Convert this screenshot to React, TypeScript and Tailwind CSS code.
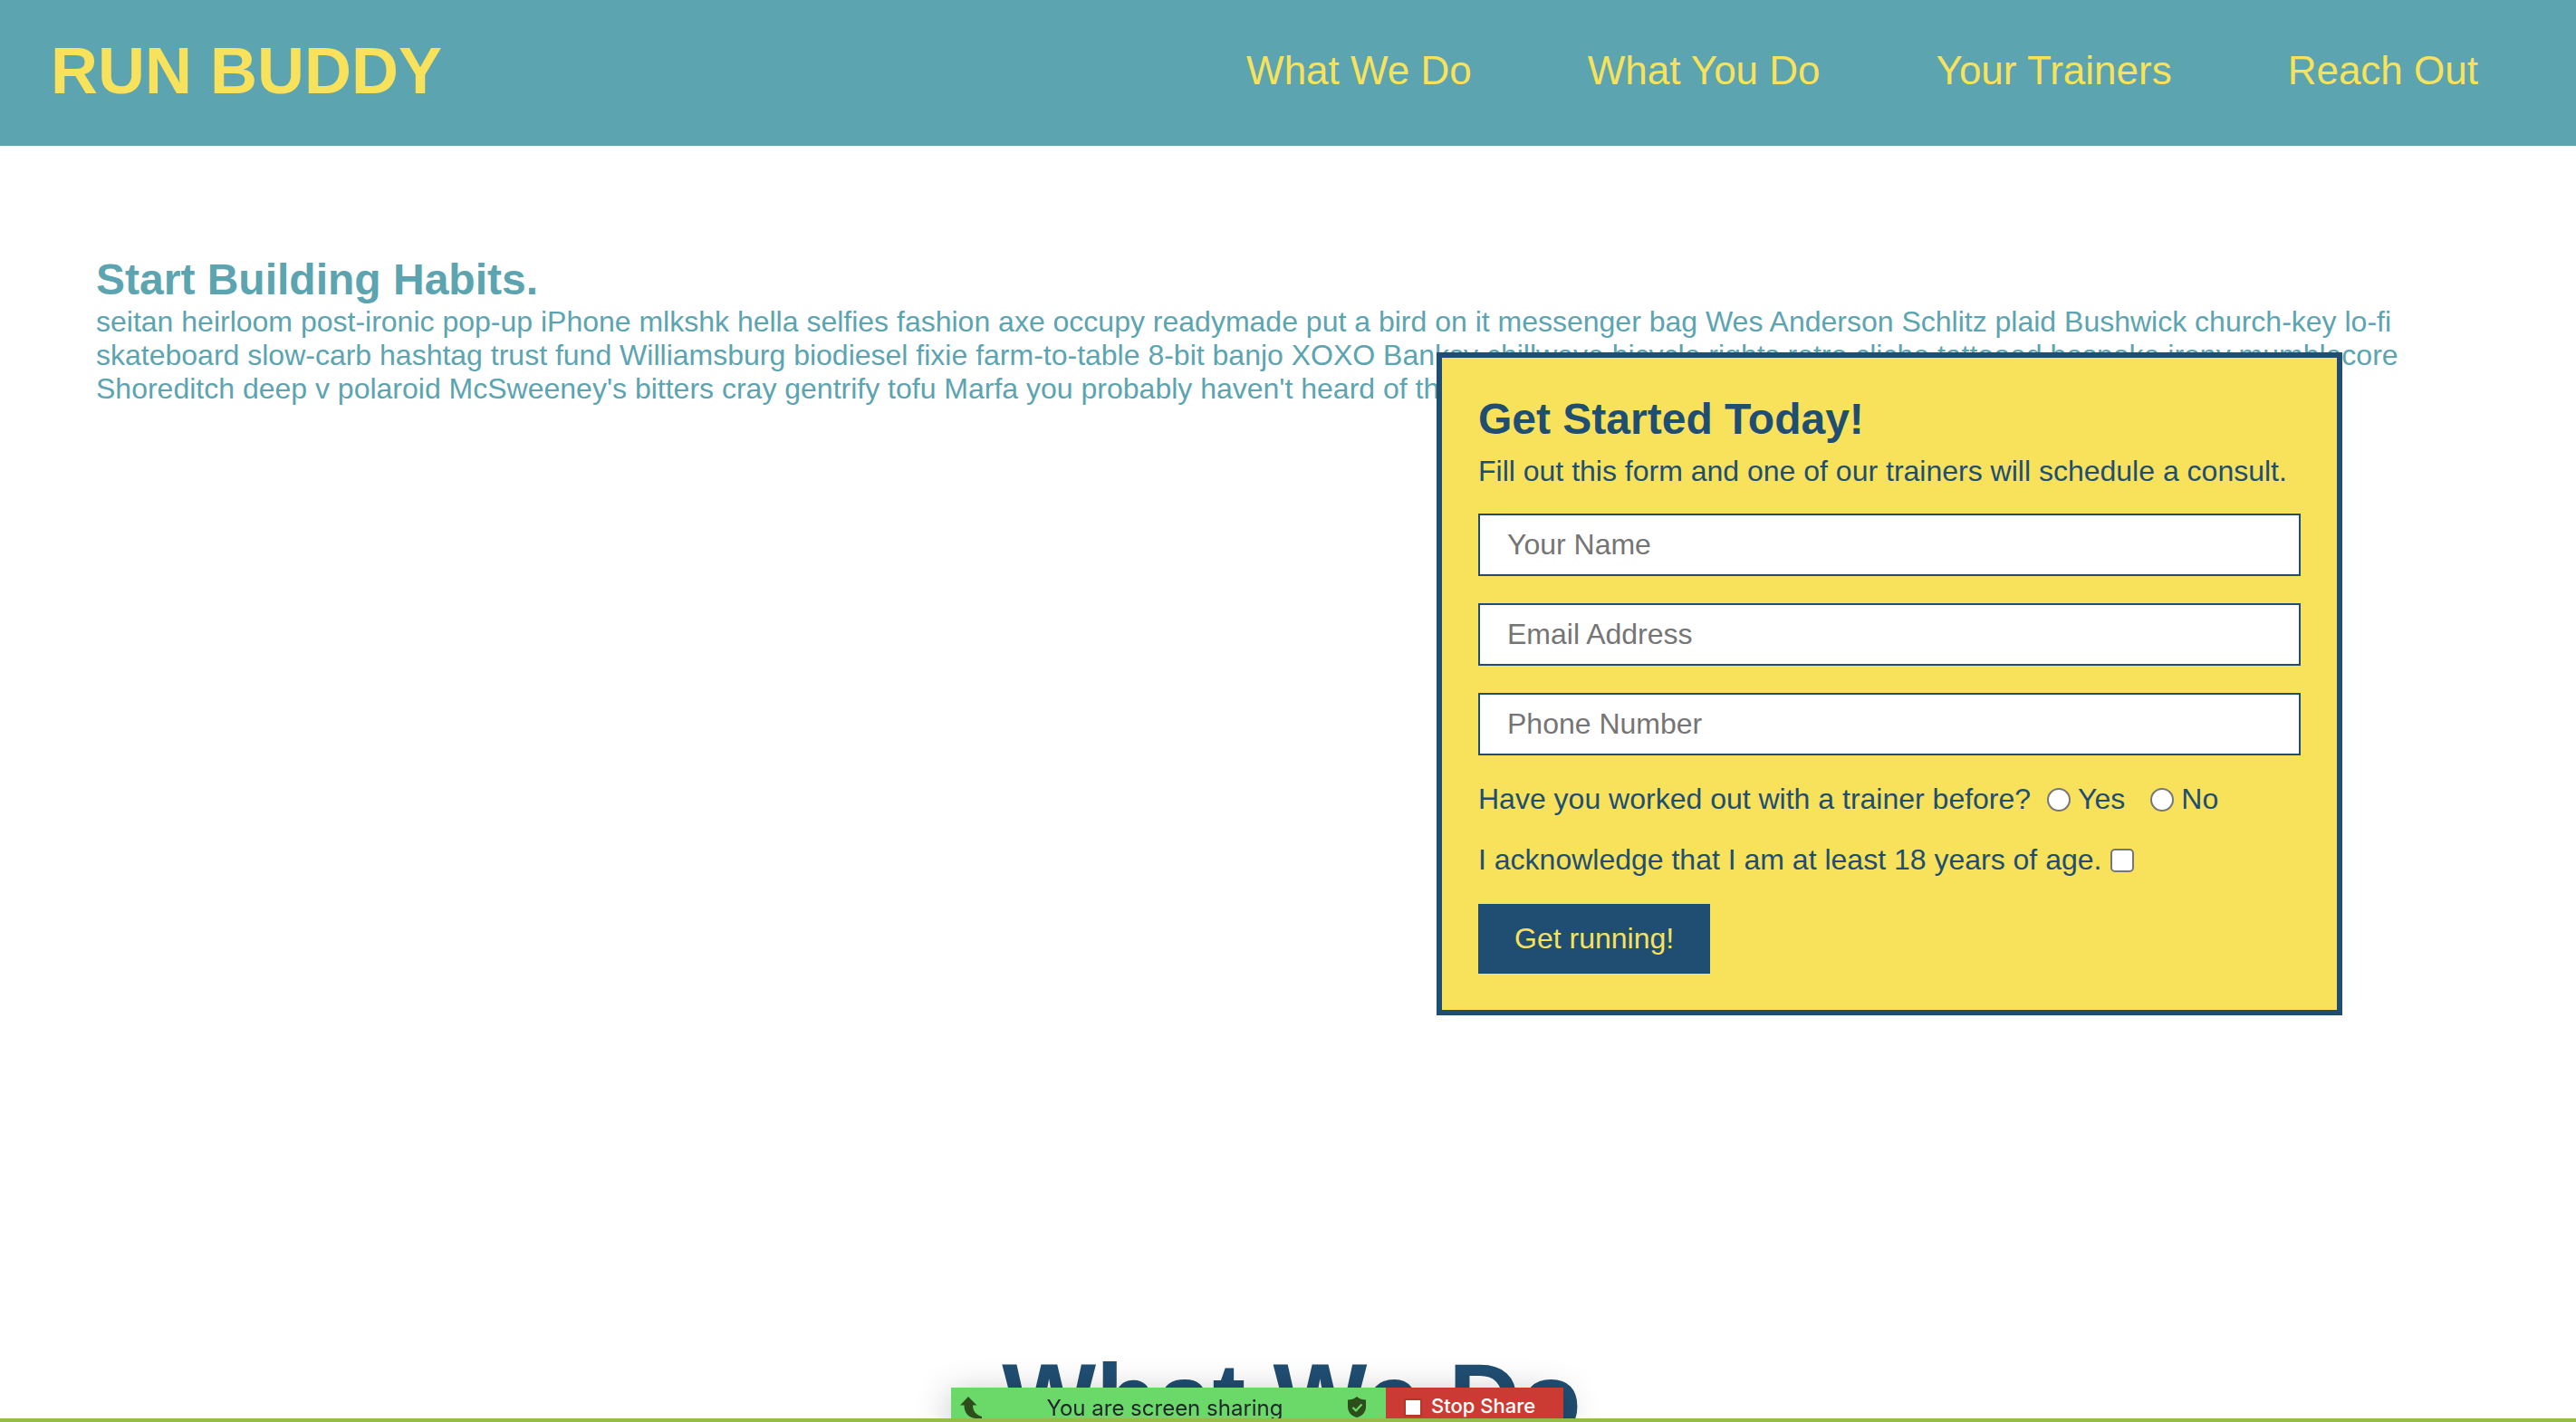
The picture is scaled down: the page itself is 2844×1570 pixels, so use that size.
import React from "react";

const NAV_LINKS = [
  { label: "What We Do", href: "#what-we-do" },
  { label: "What You Do", href: "#what-you-do" },
  { label: "Your Trainers", href: "#your-trainers" },
  { label: "Reach Out", href: "#reach-out" },
];

const FIELDS = [
  { id: "name", type: "text", label: "Your Name" },
  { id: "email", type: "email", label: "Email Address" },
  { id: "phone", type: "tel", label: "Phone Number" },
];

function Header() {
  return (
    <header className="flex items-start justify-between bg-[#5ba4b0] pt-[38px] pr-[108px] pb-[42px] pl-14 text-[#f8e25b]">
      <h1 className="text-[72px] leading-[81px] font-bold">
        <a href="#top">RUN BUDDY</a>
      </h1>
      <nav aria-label="Main" className="pt-3">
        <ul className="flex gap-32">
          {NAV_LINKS.map((link) => (
            <li key={link.href}>
              <a href={link.href} className="text-[44px] leading-[56px] font-light">
                {link.label}
              </a>
            </li>
          ))}
        </ul>
      </nav>
    </header>
  );
}

function SignupForm() {
  return (
    <form
      onSubmit={(event) => event.preventDefault()}
      className="absolute top-[228px] right-[258px] w-[1000px] border-[6px] border-[#204e72] bg-[#f8e25b] p-10 text-[32px] leading-[37px] text-[#204e72]"
    >
      <h3 className="text-[48px] leading-[55px] font-bold">Get Started Today!</h3>
      <p className="mt-3 mb-7">Fill out this form and one of our trainers will schedule a consult.</p>
      {FIELDS.map((field) => (
        <input
          key={field.id}
          id={field.id}
          name={field.id}
          type={field.type}
          aria-label={field.label}
          placeholder={field.label}
          className="mb-[30px] block h-[69px] w-full border-2 border-[#204e72] bg-white px-[30px] placeholder:text-[#757575]"
        />
      ))}
      <fieldset className="mb-[30px] flex items-center">
        <legend className="float-left mr-[18px]">Have you worked out with a trainer before?</legend>
        <Radio id="trainer-yes" label="Yes" />
        <Radio id="trainer-no" label="No" />
      </fieldset>
      <div className="mb-[30px] flex items-center">
        <label htmlFor="age">I acknowledge that I am at least 18 years of age.</label>
        <input
          id="age"
          type="checkbox"
          className="ml-2.5 size-[26px] appearance-none rounded-[5px] border-2 border-[#767676] bg-white checked:bg-[#204e72]"
        />
      </div>
      <button type="submit" className="block h-[77px] bg-[#204e72] px-10 text-[#f8e25b]">
        Get running!
      </button>
    </form>
  );
}

function Radio({ id, label }: { id: string; label: string }) {
  return (
    <span className="mr-7 flex items-center gap-2">
      <input
        id={id}
        type="radio"
        name="trainer"
        className="size-[26px] appearance-none rounded-full border-2 border-[#767676] bg-white checked:bg-[#204e72]"
      />
      <label htmlFor={id}>{label}</label>
    </span>
  );
}

function Hero() {
  return (
    <section className="relative h-[1320px] px-[106px] pt-[120px] text-[#5ba4b0]">
      <h2 className="text-[48px] leading-[56px] font-bold">Start Building Habits.</h2>
      <p className="text-[32px] leading-[37px]">
        seitan heirloom post-ironic pop-up iPhone mlkshk hella selfies fashion axe occupy readymade put a bird on it
        messenger bag Wes Anderson Schlitz plaid Bushwick church-key lo-fi skateboard slow-carb hashtag trust fund
        Williamsburg biodiesel fixie farm-to-table 8-bit banjo XOXO Banksy chillwave bicycle rights retro cliche
        tattooed bespoke irony mumblecore Shoreditch deep v polaroid McSweeney's bitters cray gentrify tofu Marfa you
        probably haven't heard of them.
      </p>
      <SignupForm />
    </section>
  );
}

function ShareBar() {
  return (
    <div className="fixed inset-x-0 bottom-0 flex h-[38px] flex-col items-center font-[Inter,sans-serif] text-2xl">
      <div className="mr-[68px] flex h-[34px] w-[676px] shadow-[0_10px_40px_rgba(0,0,0,0.3)]">
        <div className="flex w-[480px] items-start justify-between bg-[#6ad96a] pt-2.5 pr-[22px] pl-2.5">
          <svg viewBox="0 0 24 24" className="size-6 text-[#2d4d1b]" fill="currentColor" aria-hidden="true">
            <path d="M9 0 L18.500 9.500 H14 C14 16 18 20.500 24 22 V24 H17 C9 23 4.500 18 4.500 9.500 H0 Z" />
          </svg>
          <span className="pt-px leading-6 text-[#24242f]">You are screen sharing</span>
          <svg viewBox="0 0 20 23" className="h-[23px] w-5" aria-hidden="true">
            <path
              d="M10 0 C12.500 2.500 16.500 3.500 20 3.500 V11 C20 17 16 21.500 10 23 C4 21.500 0 17 0 11 V3.500 C3.500 3.500 7.500 2.500 10 0 Z"
              fill="#2d4d1b"
            />
            <path d="M5.500 12 L9 15.500 L15.500 8.500" fill="none" stroke="#6ad96a" strokeWidth="2.2" />
          </svg>
        </div>
        <button
          type="button"
          className="flex flex-1 items-start gap-3 bg-[#cb3b33] pt-2 pl-[22px] text-[22px] leading-6 font-medium text-white"
        >
          <span className="mt-1.5 size-4 bg-white ring-2 ring-black/10" />
          Stop Share
        </button>
      </div>
      <div className="h-1 w-full bg-[#95bb48]" />
    </div>
  );
}

export default function App() {
  return (
    <div id="top" className="h-screen overflow-hidden bg-white font-['Liberation_Sans',Helvetica,Arial,sans-serif]">
      <Header />
      <main>
        <Hero />
        <section id="what-we-do" className="pl-2 text-center text-[#204e72]">
          <h2 className="text-[110px] leading-[126px] font-bold">What We Do</h2>
        </section>
      </main>
      <ShareBar />
    </div>
  );
}
